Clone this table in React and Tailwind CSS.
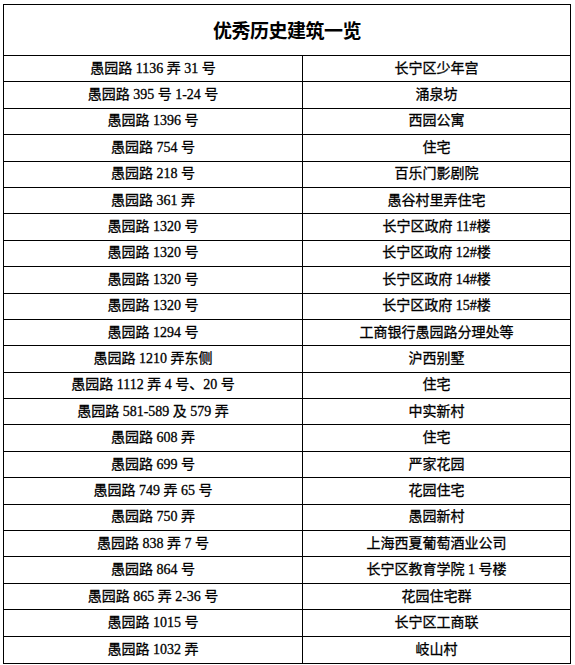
const rows = [
  ["愚园路 1136 弄 31 号", "长宁区少年宫"],
  ["愚园路 395 号 1-24 号", "涌泉坊"],
  ["愚园路 1396 号", "西园公寓"],
  ["愚园路 754 号", "住宅"],
  ["愚园路 218 号", "百乐门影剧院"],
  ["愚园路 361 弄", "愚谷村里弄住宅"],
  ["愚园路 1320 号", "长宁区政府 11#楼"],
  ["愚园路 1320 号", "长宁区政府 12#楼"],
  ["愚园路 1320 号", "长宁区政府 14#楼"],
  ["愚园路 1320 号", "长宁区政府 15#楼"],
  ["愚园路 1294 号", "工商银行愚园路分理处等"],
  ["愚园路 1210 弄东侧", "沪西别墅"],
  ["愚园路 1112 弄 4 号、20 号", "住宅"],
  ["愚园路 581-589 及 579 弄", "中实新村"],
  ["愚园路 608 弄", "住宅"],
  ["愚园路 699 号", "严家花园"],
  ["愚园路 749 弄 65 号", "花园住宅"],
  ["愚园路 750 弄", "愚园新村"],
  ["愚园路 838 弄 7 号", "上海西夏葡萄酒业公司"],
  ["愚园路 864 号", "长宁区教育学院 1 号楼"],
  ["愚园路 865 弄 2-36 号", "花园住宅群"],
  ["愚园路 1015 号", "长宁区工商联"],
  ["愚园路 1032 弄", "岐山村"],
]

export default function App() {
  return (
    <div className="w-[575px] h-[665px] bg-white pt-[4px] pl-[3px] font-['Liberation_Serif','Noto_Sans_CJK_SC',serif] text-black">
      <div className="w-[568px] h-[660px] border border-black flex flex-col">
        {/* title */}
        <div className="h-[51px] shrink-0 border-b border-black flex items-center justify-center">
          <h1 className="text-[19px] font-bold font-['Noto_Sans_CJK_SC',sans-serif] tracking-tight">优秀历史建筑一览</h1>
        </div>

        <div className="flex-1 grid grid-rows-[repeat(23,minmax(0,1fr))]">
          {rows.map(([addr, name], i) => (
            <div
              key={i}
              className={`grid grid-cols-[299px_1fr] text-[14px] leading-none [-webkit-text-stroke:0.3px_#000] ${i < rows.length - 1 ? "border-b border-black" : ""}`}
            >
              <div className="border-r border-black flex items-center justify-center">{addr}</div>
              <div className="flex items-center justify-center">{name}</div>
            </div>
          ))}
        </div>
      </div>
    </div>
  )
}
